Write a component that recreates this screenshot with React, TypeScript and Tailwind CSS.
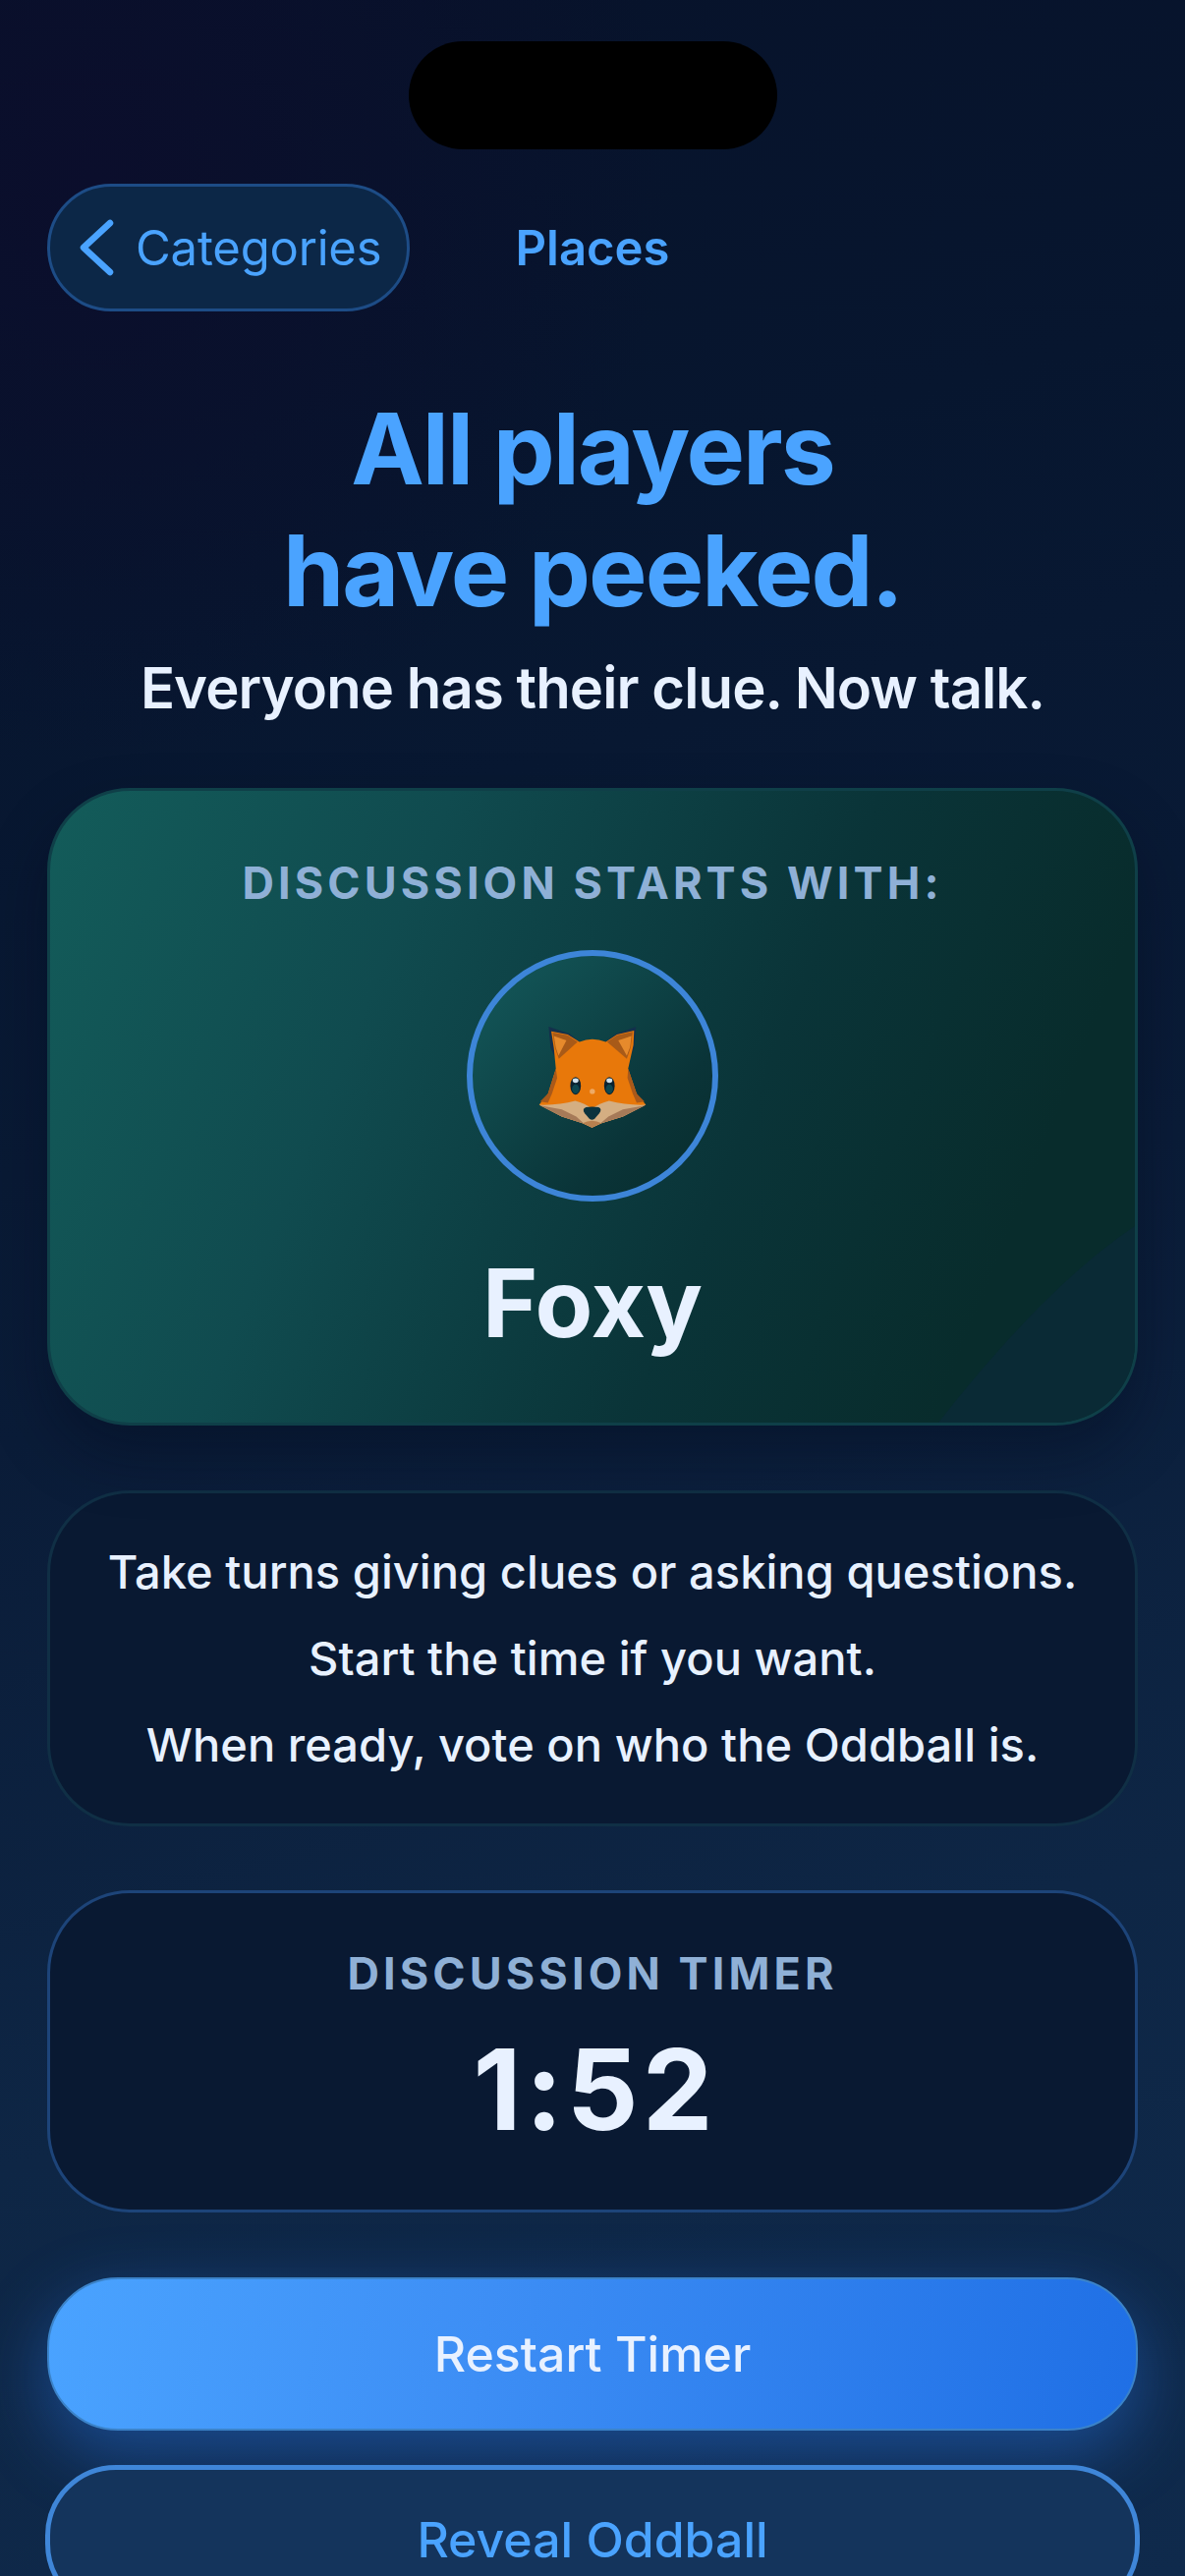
const sans = 'font-["Inter","Noto_Sans",sans-serif]';

function FoxFace() {
  return (
    <svg viewBox="140 125 335 320" className="w-[112px] h-[107px]">
      {/* ears */}
      <path d="M174 134 L238 156 L268 180 L200 240 L180 200 Z" fill="#14304c" />
      <path d="M440 134 L380 156 L346 180 L415 240 L434 200 Z" fill="#14304c" />
      {/* head */}
      <path d="M182 148 L232 158 L268 180 Q306 164 348 180 L382 158 L434 146 L432 190 L416 262 L442 338 L470 372 L400 408 L335 428 L306 441 L277 428 L214 408 L145 372 L172 338 L196 262 L190 200 Z" fill="#e8780a" />
      <path d="M186 152 L232 160 L262 180 L205 232 L194 200 Z" fill="#a85a18" />
      <path d="M190 162 L228 176 L204 222 L196 198 Z" fill="#e68a2c" />
      <path d="M430 150 L382 160 L352 180 L412 232 L424 196 Z" fill="#a85a18" />
      <path d="M426 162 L386 176 L412 222 L422 196 Z" fill="#e68a2c" />
      {/* side shade */}
      <path d="M196 262 L172 338 L148 362 L172 366 L184 338 L200 290 Z" fill="#a9591a" />
      <path d="M416 262 L442 338 L466 362 L442 366 L430 338 L414 290 Z" fill="#a9591a" />
      {/* muzzle */}
      <path d="M145 372 Q205 374 255 360 Q285 368 306 384 Q328 368 358 360 Q410 374 470 372 L400 408 L335 428 L306 441 L277 428 L214 408 Z" fill="#d4ae82" />
      <path d="M148 374 L214 386 L258 408 L280 428 L277 428 L214 408 Z" fill="#a67a58" />
      <path d="M467 374 L400 386 L356 408 L332 428 L335 428 L400 408 Z" fill="#a67a58" />
      <path d="M277 428 Q306 412 335 428 L306 441 Z" fill="#b8804f" />
      {/* eyes */}
      <ellipse cx="256" cy="314" rx="16" ry="27" fill="#0a2230" />
      <ellipse cx="256" cy="324" rx="11" ry="14" fill="#0e4750" />
      <ellipse cx="256" cy="298" rx="9" ry="7" fill="#cfe0ea" />
      <ellipse cx="359" cy="314" rx="16" ry="27" fill="#0a2230" />
      <ellipse cx="359" cy="324" rx="11" ry="14" fill="#0e4750" />
      <ellipse cx="359" cy="298" rx="9" ry="7" fill="#cfe0ea" />
      <circle cx="307" cy="331" r="8" fill="#eeaa66" />
      {/* nose */}
      <path d="M288 379 Q306 376 326 379 Q338 384 328 398 L314 414 Q306 420 298 414 L284 398 Q274 384 288 379 Z" fill="#0b333e" />
    </svg>
  );
}

function Card({ className, children }: { className: string; children: React.ReactNode }) {
  return <div className={`mx-12 rounded-[84px] ${className}`}>{children}</div>;
}

export default function App() {
  return (
    <div className={`relative h-[2622px] overflow-hidden bg-[radial-gradient(circle_at_8%_7%,#0b0e2c_0%,rgba(11,14,44,0)_22%),linear-gradient(165deg,#07122a_0%,#07162f_22%,#0a1c38_50%,#0e2645_75%,#0f2a4c_100%)] ${sans}`}>
      {/* Dynamic island */}
      <div className="mx-auto mt-[42px] h-[110px] w-[375px] rounded-[55px] bg-black" />

      {/* Nav */}
      <div className="mt-[35px] grid grid-cols-[1fr_auto_1fr] items-center px-12">
        <button className="flex h-[130px] w-[369px] items-center rounded-[65px] border-[3px] border-[#1d4c86] bg-[#0c2747] pl-[30px] text-[#4aa3ff]">
          <svg viewBox="0 0 36 58" className="h-[58px] w-[36px]" fill="none" stroke="currentColor" strokeWidth="6.5" strokeLinecap="round" strokeLinejoin="round">
            <path d="M31 4 L4 29 L31 54" />
          </svg>
          <span className="ml-[21px] text-[49px] leading-none tracking-[-0.2px]">Categories</span>
        </button>
        <div className="text-[49px] font-semibold leading-none text-[#4aa3ff]">Places</div>
        <div />
      </div>

      {/* Heading */}
      <h1 className="mt-[78px] text-center text-[100px] font-bold leading-[124px] tracking-[-2px] text-[#4aa3ff]">
        All players
        <br />
        have peeked.
      </h1>
      <p className="mt-[21px] text-center text-[58px] font-semibold leading-[72px] tracking-[-0.9px] text-[#e8f1ff]">
        Everyone has their clue. Now talk.
      </p>

      {/* Starter card */}
      <Card className="relative mt-[66px] flex h-[649px] flex-col items-center overflow-hidden border-[3px] border-[#0f3f48] bg-[linear-gradient(112deg,#135c5a_0%,#104b4f_30%,#0a3438_62%,#082c2c_85%)] shadow-[0_30px_60px_rgba(3,10,25,0.35)]">
        <svg viewBox="0 0 200 200" className="absolute bottom-0 right-0 h-[200px] w-[200px]">
          <path d="M200 0 Q110 60 0 200 L200 200 Z" fill="#0a2a35" />
        </svg>
        <div className="relative mt-[67px] text-[45px] font-bold leading-[54px] tracking-[4.1px] text-[#8fb0d6]">
          DISCUSSION STARTS WITH:
        </div>
        <div className="relative mt-[41px] flex h-[256px] w-[256px] items-center justify-center rounded-full border-[6px] border-[#3d85d8] bg-[linear-gradient(135deg,#145a5c_0%,#0a3438_70%,#082c2c_100%)]">
          <FoxFace />
        </div>
        <div className="relative mt-[45px] text-[96px] font-bold leading-[116px] text-[#e8f1ff]">Foxy</div>
      </Card>

      {/* Instructions */}
      <Card className="mt-[66px] flex h-[342px] flex-col justify-center border-[3px] border-[#102f45] bg-[#091932] text-center text-[47px] font-medium leading-[88px] tracking-[0.05px] text-[#e8f1ff]">
        <p>Take turns giving clues or asking questions.</p>
        <p>Start the time if you want.</p>
        <p>When ready, vote on who the Oddball is.</p>
      </Card>

      {/* Timer */}
      <Card className="mt-[65px] flex h-[328px] flex-col items-center border-[3px] border-[#1d4479] bg-[#091932]">
        <div className="mt-[55px] text-[45px] font-bold leading-[54px] tracking-[4.1px] text-[#8fb0d6]">DISCUSSION TIMER</div>
        <div className="ml-[5px] mt-[23px] text-[114px] font-bold leading-[136px] tracking-[4px] text-[#e8f1ff]">1:52</div>
      </Card>

      {/* Actions */}
      <button className="mx-12 mt-[66px] flex h-[156px] w-[1110px] items-center justify-center rounded-[72px] border-2 border-[#3b83c9] bg-[linear-gradient(100deg,#4aa3ff_0%,#3d8ef5_40%,#1f6fe5_100%)] text-[50px] font-medium text-[#e8f1ff] shadow-[0_24px_70px_rgba(45,130,255,0.4)]">
        Restart Timer
      </button>
      <button className="relative mx-[46px] mt-[35px] flex h-[152px] w-[1114px] items-center justify-center rounded-[72px] border-[5px] border-[#3f86d8] bg-[#14345c] text-[50px] font-medium text-[#4aa3ff]">
        Reveal Oddball
      </button>
    </div>
  );
}
